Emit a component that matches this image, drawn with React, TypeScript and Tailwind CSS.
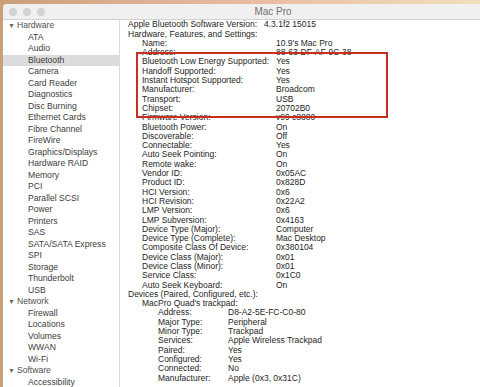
const sidebar: { label: string; group?: boolean; selected?: boolean }[] = [
  { label: "Hardware", group: true },
  { label: "ATA" },
  { label: "Audio" },
  { label: "Bluetooth", selected: true },
  { label: "Camera" },
  { label: "Card Reader" },
  { label: "Diagnostics" },
  { label: "Disc Burning" },
  { label: "Ethernet Cards" },
  { label: "Fibre Channel" },
  { label: "FireWire" },
  { label: "Graphics/Displays" },
  { label: "Hardware RAID" },
  { label: "Memory" },
  { label: "PCI" },
  { label: "Parallel SCSI" },
  { label: "Power" },
  { label: "Printers" },
  { label: "SAS" },
  { label: "SATA/SATA Express" },
  { label: "SPI" },
  { label: "Storage" },
  { label: "Thunderbolt" },
  { label: "USB" },
  { label: "Network", group: true },
  { label: "Firewall" },
  { label: "Locations" },
  { label: "Volumes" },
  { label: "WWAN" },
  { label: "Wi-Fi" },
  { label: "Software", group: true },
  { label: "Accessibility" },
];

// [level, key, value]
const rows: [number, string, string][] = [
  [0, "Apple Bluetooth Software Version:", "4.3.1f2 15015"],
  [0, "Hardware, Features, and Settings:", ""],
  [1, "Name:", "10.9's Mac Pro"],
  [1, "Address:", "88-63-DF-AF-9C-38"],
  [1, "Bluetooth Low Energy Supported:", "Yes"],
  [1, "Handoff Supported:", "Yes"],
  [1, "Instant Hotspot Supported:", "Yes"],
  [1, "Manufacturer:", "Broadcom"],
  [1, "Transport:", "USB"],
  [1, "Chipset:", "20702B0"],
  [1, "Firmware Version:", "v99 c8800"],
  [1, "Bluetooth Power:", "On"],
  [1, "Discoverable:", "Off"],
  [1, "Connectable:", "Yes"],
  [1, "Auto Seek Pointing:", "On"],
  [1, "Remote wake:", "On"],
  [1, "Vendor ID:", "0x05AC"],
  [1, "Product ID:", "0x828D"],
  [1, "HCI Version:", "0x6"],
  [1, "HCI Revision:", "0x22A2"],
  [1, "LMP Version:", "0x6"],
  [1, "LMP Subversion:", "0x4163"],
  [1, "Device Type (Major):", "Computer"],
  [1, "Device Type (Complete):", "Mac Desktop"],
  [1, "Composite Class Of Device:", "0x380104"],
  [1, "Device Class (Major):", "0x01"],
  [1, "Device Class (Minor):", "0x01"],
  [1, "Service Class:", "0x1C0"],
  [1, "Auto Seek Keyboard:", "On"],
  [0, "Devices (Paired, Configured, etc.):", ""],
  [1, "MacPro Quad's trackpad:", ""],
  [2, "Address:", "D8-A2-5E-FC-C0-80"],
  [2, "Major Type:", "Peripheral"],
  [2, "Minor Type:", "Trackpad"],
  [2, "Services:", "Apple Wireless Trackpad"],
  [2, "Paired:", "Yes"],
  [2, "Configured:", "Yes"],
  [2, "Connected:", "No"],
  [2, "Manufacturer:", "Apple (0x3, 0x31C)"],
];

function InfoRow({ level, k, v }: { level: number; k: string; v: string }) {
  return (
    <div
      className={
        level === 0
          ? "flex h-[9.3px] items-center pl-[8px]"
          : level === 1
            ? "flex h-[9.3px] items-center pl-[22px]"
            : "flex h-[9.3px] items-center pl-[38px]"
      }
    >
      <span
        className={
          level === 0
            ? "w-[136px] shrink-0 whitespace-nowrap"
            : level === 1
              ? "w-[134px] shrink-0 whitespace-nowrap"
              : "w-[70px] shrink-0 whitespace-nowrap"
        }
      >
        {k}
      </span>
      <span className="whitespace-nowrap">{v}</span>
    </div>
  );
}

export default function App() {
  return (
    <div className="relative h-[387px] w-[480px] overflow-hidden bg-gradient-to-r from-[#c9a07a] via-[#e9b9a2] to-[#f0dfbd] pl-[3px] pt-[4px] font-['Liberation_Sans',Arial,sans-serif]">
      <div className="flex h-[420px] w-[540px] flex-col rounded-tl-[4px] bg-white">
        {/* title bar */}
        <div className="relative flex h-[16px] shrink-0 items-center justify-center rounded-tl-[4px] border-b border-[#d2d2d2] bg-[#f0f0f0]">
          <div className="absolute left-[6px] top-[4px] flex gap-[6px]">
            <span className="h-[8px] w-[8px] rounded-full bg-[#d4d4d4]" />
            <span className="h-[8px] w-[8px] rounded-full bg-[#d4d4d4]" />
            <span className="h-[8px] w-[8px] rounded-full bg-[#d4d4d4]" />
          </div>
          <span className="text-[10px] leading-none text-[#707070]">Mac Pro</span>
        </div>

        <div className="flex min-h-0 flex-1">
          {/* sidebar */}
          <div className="w-[117px] shrink-0 border-r border-[#dadada] bg-white text-[8.6px] text-[#3c3c3c]">
            {sidebar.map((s) => (
              <div
                key={s.label}
                className={
                  s.selected
                    ? "flex h-[11.5px] items-center bg-[#dcdcdc] pl-[25px]"
                    : s.group
                      ? "flex h-[11.5px] items-center pl-[5px] text-[#505050]"
                      : "flex h-[11.5px] items-center pl-[25px]"
                }
              >
                {s.group && <span className="mr-[2px] text-[7px] text-[#6a6a6a]">▼</span>}
                {s.label}
              </div>
            ))}
          </div>

          {/* detail pane */}
          <div className="min-w-0 flex-1 text-[8.5px] text-[#1e1e1e]">
            {rows.map(([level, k, v], i) => (
              <InfoRow key={i} level={level} k={k} v={v} />
            ))}
          </div>
        </div>
      </div>

      {/* annotation box */}
      <div className="absolute left-[136px] top-[52px] h-[66px] w-[252px] border-2 border-[#c7301f]" />
    </div>
  );
}
